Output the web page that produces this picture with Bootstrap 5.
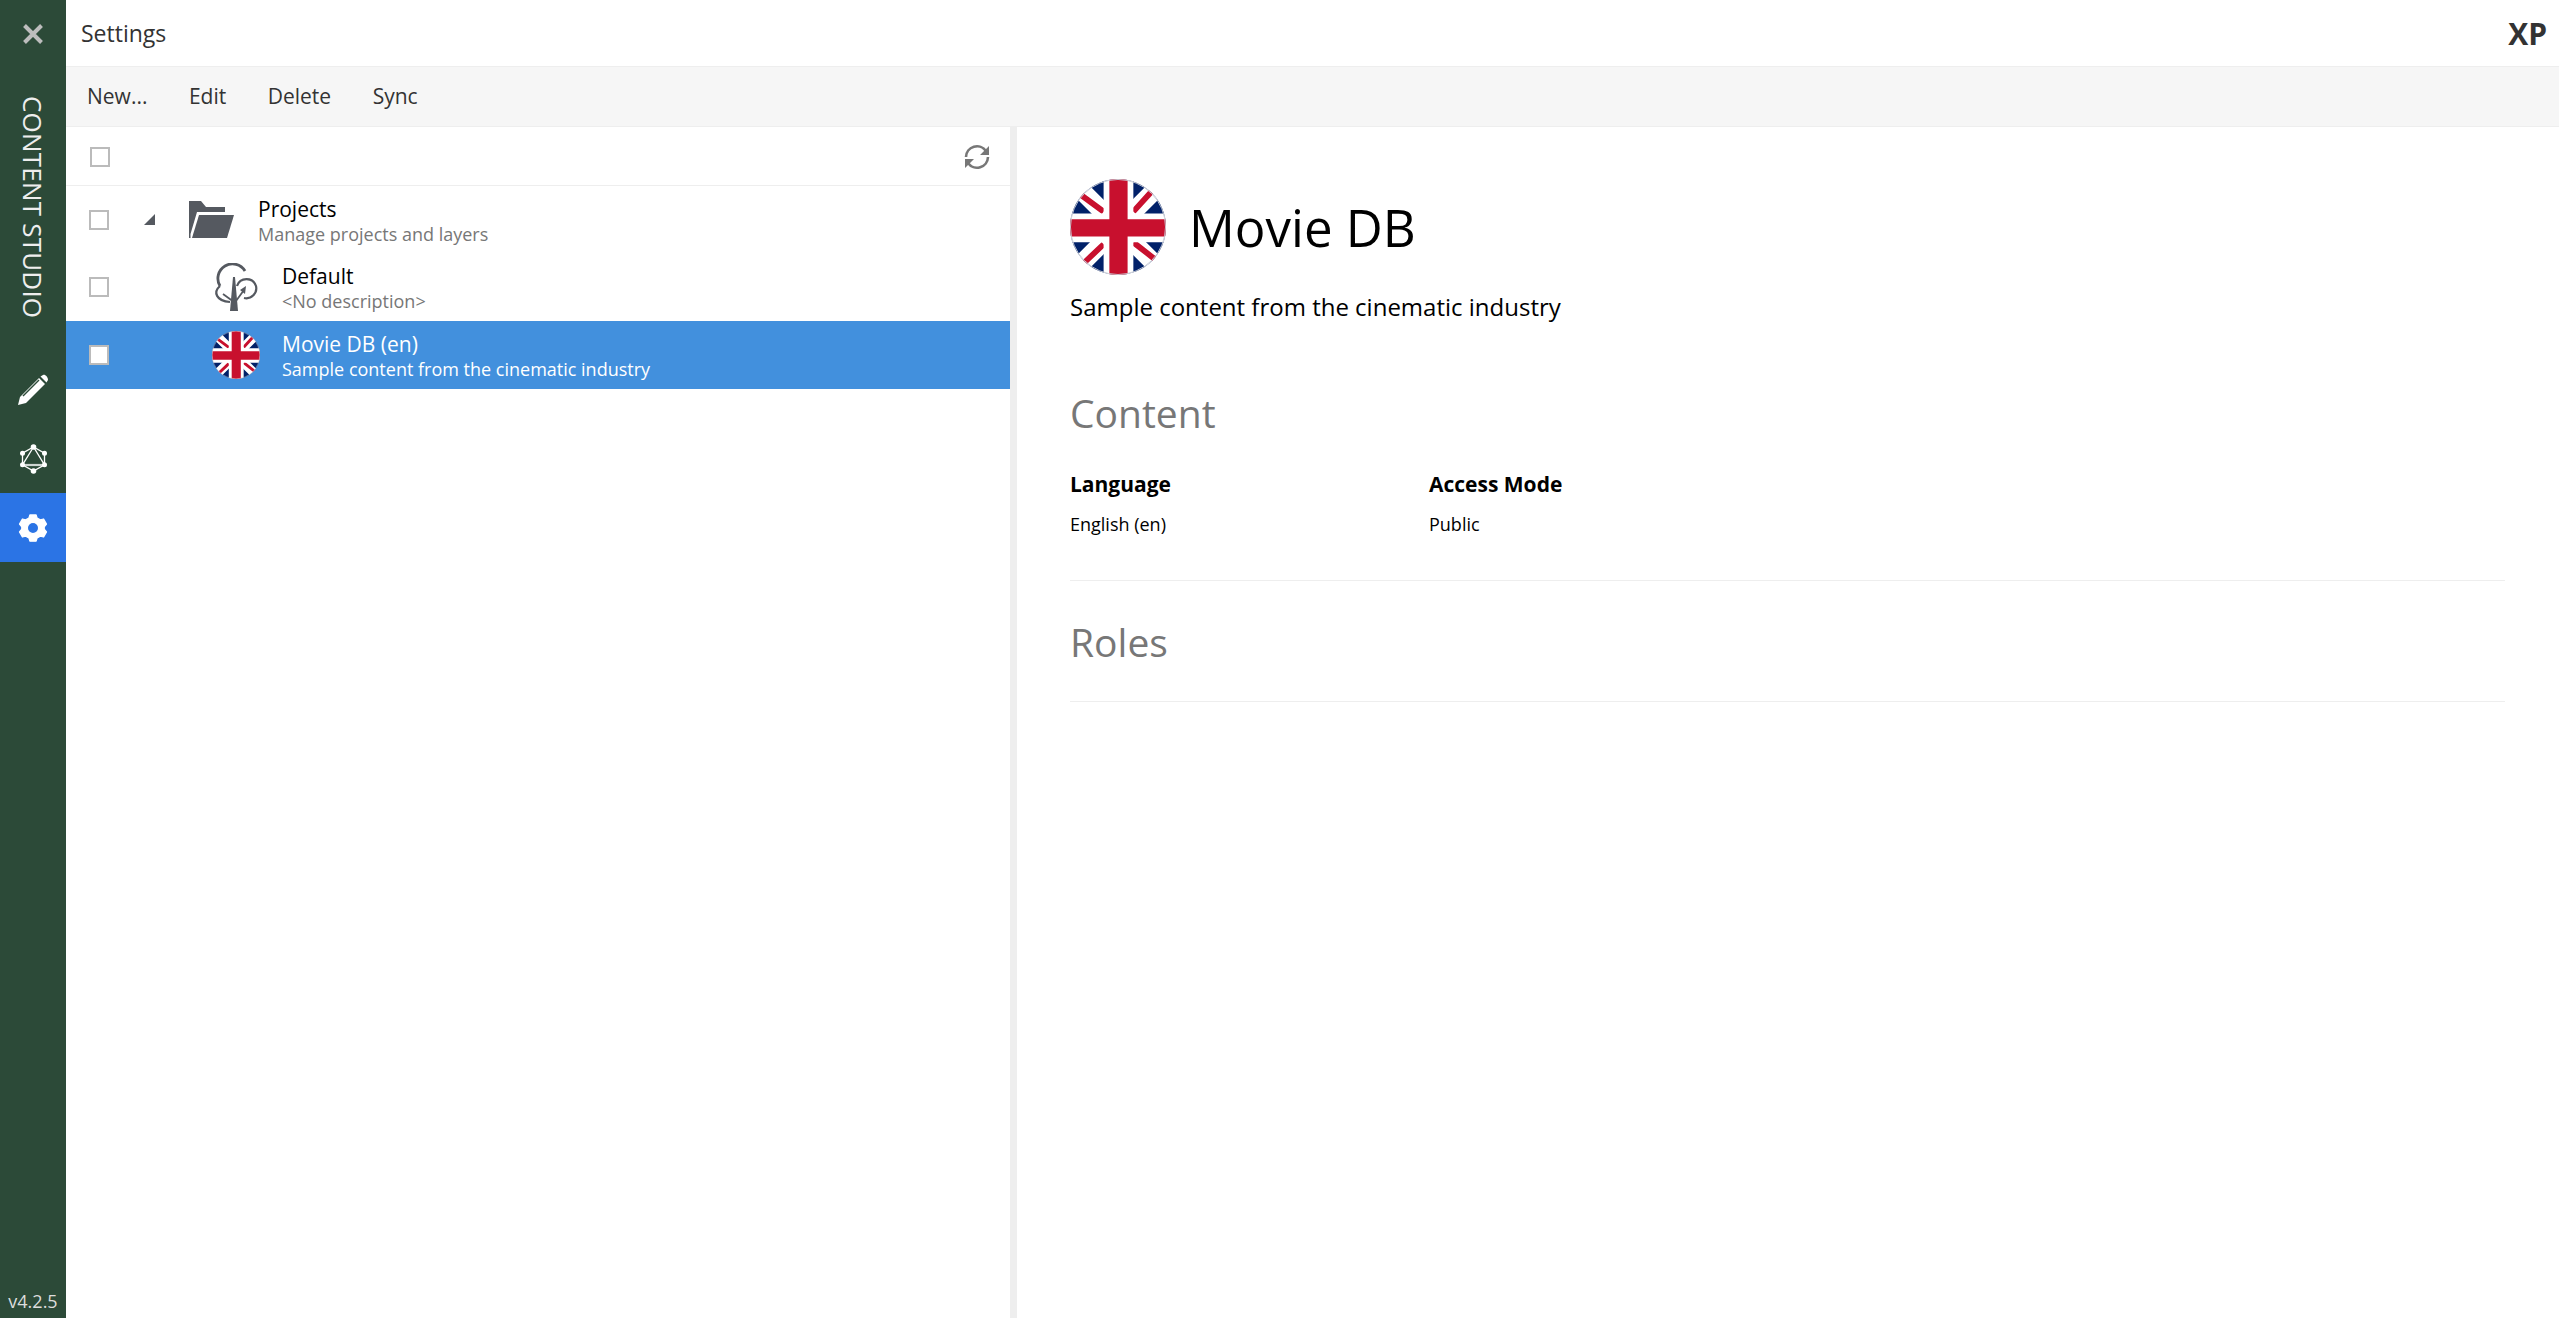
<!DOCTYPE html>
<html lang="en">
<head>
  <title>Settings - Content Studio</title>
  <meta charset="utf-8" />
  <link href="https://cdn.jsdelivr.net/npm/bootstrap@5.3.3/dist/css/bootstrap.min.css" rel="stylesheet" />
  <script src="https://cdn.jsdelivr.net/npm/bootstrap@5.3.3/dist/js/bootstrap.bundle.min.js"></script>
  <style>
    html, body { height: 100%; }
    body { font-family: "Open Sans", sans-serif; color: #000; overflow: hidden; }
    .launcher { width: 66px; background: #2c4a38; color: #fff; }
    .launcher-close { height: 68px; }
    .launcher-title { writing-mode: vertical-rl; font-size: 26px; line-height: 30px; height: 287px; padding-top: 28px; color: #eee; letter-spacing: .2px; }
    .launcher-item { height: 69px; }
    .launcher-item.active-app { background: #2b74e5; }
    .launcher-version { font-size: 18px; line-height: 20px; color: #ddd; padding-bottom: 7px; }
    .app-title { height: 67px; padding-left: 15px; padding-right: 12px; font-size: 23px; color: #333; border-bottom: 1px solid #eee; }
    .xp-logo { font-weight: 700; font-size: 30px; color: #333; }
    .tool-strip { height: 60px; background: #f6f6f6; border-bottom: 1px solid #eee; padding-left: 21px; gap: 41.500px; font-size: 21px; color: #333; }
    .tree-panel { width: 944px; }
    .panel-split { width: 7px; background: #eee; }
    .tree-head { height: 59px; padding: 2px 19px 0 24px; border-bottom: 1px solid #eee; }
    .tick { width: 20px; height: 20px; border: 2px solid #bbb; background: #fff; flex: none; }
    .tree-row { height: 67.500px; padding-left: 23px; }
    .row-arrow { width: 11px; margin-left: 35px; margin-right: 33px; flex: none; }
    .row-spacer { width: 103px; flex: none; }
    .row-icon { width: 48px; flex: none; }
    .row-text { margin-left: 22px; padding-top: 2px; }
    .row-name { font-size: 21px; line-height: 26px; }
    .row-sub { font-size: 18px; line-height: 24px; color: #777; }
    .row-picked { background: #4290dd; color: #fff; }
    .row-picked .row-sub { color: #fff; }
    .detail-pane { padding: 52px 54px 0 53px; }
    .detail-name { font-size: 51px; margin-left: 23px; padding-top: 2px; line-height: 1.2; font-weight: 400; margin-bottom: 0; }
    .detail-desc { font-size: 24px; line-height: 30px; margin-top: 17px; margin-bottom: 0; }
    .detail-section { font-size: 39px; line-height: 52px; color: #777; font-weight: 400; margin: 0; }
    .section-one { margin-top: 65px; padding-bottom: 44px; border-bottom: 1px solid #eee; }
    .section-two { margin-top: 35px; padding-bottom: 33px; border-bottom: 1px solid #eee; }
    .info-col { width: 359px; }
    .info-label { font-size: 21px; font-weight: 700; line-height: 28px; margin-top: 31px; }
    .info-value { font-size: 18px; line-height: 24px; margin-top: 14px; }
  </style>
</head>
<body>
  <svg width="0" height="0" class="position-absolute">
    <defs>
      <clipPath id="flagClip"><circle cx="50" cy="50" r="50" /></clipPath>
      <symbol id="ukFlag" viewBox="0 0 100 100">
        <g clip-path="url(#flagClip)">
          <rect width="100" height="100" fill="#012169" />
          <path d="M0 0L100 100M100 0L0 100" stroke="#fff" stroke-width="19" />
          <path d="M12 17L35 34M66 34L85 13M66 66L89 84M15 87L35 68" stroke="#c8102e" stroke-width="6" fill="none" />
          <path d="M35 0H66V100H35zM0 36H100V66H0z" fill="#fff" />
          <path d="M41 0H60V100H41zM0 42H100V60H0z" fill="#c8102e" />
        </g>
        <circle cx="50" cy="50" r="49.500" fill="none" stroke="#c9ccd4" stroke-width="1" />
      </symbol>
    </defs>
  </svg>

  <div class="d-flex h-100">
    <!-- launcher -->
    <aside class="launcher d-flex flex-column align-items-center flex-shrink-0">
      <div class="launcher-close d-flex align-items-center justify-content-center w-100">
        <svg width="20" height="20" viewBox="0 0 20 20"><path d="M1.500 1.500L18.500 18.500M18.500 1.500L1.500 18.500" stroke="#bdbdbd" stroke-width="4" /></svg>
      </div>
      <div class="launcher-title">CONTENT STUDIO</div>
      <div class="launcher-item d-flex align-items-center justify-content-center w-100">
        <svg width="32" height="32" viewBox="0 0 32 32"><path d="M1 31L3 23L22 4L28 10L9 29Z" fill="#fff" /><path d="M23.500 2.500L26 1C28 0 31 3 31 6L29.500 8.500Z" fill="#fff" /><path d="M6 22L22 6" stroke="#2c4a38" stroke-width="1.500" /></svg>
      </div>
      <div class="launcher-item d-flex align-items-center justify-content-center w-100">
        <svg width="27" height="30" viewBox="0 0 27 30" fill="#fff"><path d="M13.500 3L24.500 9.200V20.800L13.500 27L2.500 20.800V9.200ZM13.500 3L2.500 20.800H24.500Z" fill="none" stroke="#fff" stroke-width="1.300" /><path d="M5 21H22" stroke="#cfd6d2" stroke-width="2.200" /><circle cx="13.500" cy="3" r="2.800" /><circle cx="24.500" cy="9.200" r="2.500" /><circle cx="24.500" cy="20.800" r="2.500" /><circle cx="13.500" cy="27" r="2.800" /><circle cx="2.500" cy="20.800" r="2.500" /><circle cx="2.500" cy="9.200" r="2.500" /></svg>
      </div>
      <div class="launcher-item active-app d-flex align-items-center justify-content-center w-100">
        <svg width="30" height="30" viewBox="0 0 24 24"><path fill="#fff" fill-rule="evenodd" stroke="#fff" stroke-linejoin="round" d="M9.500 1.500H14.500L15.300 4.100L17.800 5.500L20.500 4.800L22.800 8.900L21 11V13L22.800 15.100L20.500 19.200L17.800 18.500L15.300 19.900L14.500 22.500H9.500L8.700 19.900L6.200 18.500L3.500 19.200L1.200 15.100L3 13V11L1.200 8.900L3.500 4.800L6.200 5.500L8.700 4.100ZM12 7.500A4.500 4.500 0 1 0 12 16.500A4.500 4.500 0 1 0 12 7.500Z" /></svg>
      </div>
      <div class="launcher-version mt-auto">v4.2.5</div>
    </aside>

    <div class="flex-grow-1 d-flex flex-column" style="min-width:0">
      <div class="app-title d-flex align-items-center justify-content-between">
        <span>Settings</span>
        <span class="xp-logo">XP</span>
      </div>
      <div class="tool-strip d-flex align-items-center">
        <span>New...</span><span>Edit</span><span>Delete</span><span>Sync</span>
      </div>

      <div class="d-flex flex-grow-1" style="min-height:0">
        <section class="tree-panel flex-shrink-0">
          <div class="tree-head d-flex align-items-center justify-content-between">
            <span class="tick"></span>
            <svg width="28" height="28" viewBox="0 0 28 28" fill="none"><path d="M3 14A11 11 0 0 1 23 8M25 14A11 11 0 0 1 5 20" stroke="#777" stroke-width="2.600" /><path d="M26 3V12H17ZM2 25V16H11Z" fill="#777" /></svg>
          </div>
          <div class="tree-row d-flex align-items-center">
            <span class="tick"></span>
            <svg class="row-arrow" height="11" viewBox="0 0 11 11"><path d="M0 11H11V0Z" fill="#555960" /></svg>
            <svg class="row-icon" height="37" viewBox="0 0 48 37"><path d="M1 37V0H13L18 6H37V11H9L2.500 33V37Z" fill="#555960" /><path d="M4 37L11 14H46L39 37Z" fill="#555960" /></svg>
            <div class="row-text">
              <div class="row-name">Projects</div>
              <div class="row-sub">Manage projects and layers</div>
            </div>
          </div>
          <div class="tree-row d-flex align-items-center">
            <span class="tick"></span>
            <span class="row-spacer"></span>
            <svg class="row-icon" height="48" viewBox="-3 0 48 48" fill="none" stroke="#555960"><path d="M5 23A14.500 14.500 0 1 1 30 8" stroke-width="2.800" /><path d="M22 23A10 10 0 0 1 41 23A10 10 0 0 1 29 35" stroke-width="2.200" /><path d="M5 23C-2 29 1 38 15 39" stroke-width="2.200" /><path d="M8 31L19 39M21 38L29 27" stroke-width="1.800" /><path d="M18 14H20L23 48H15Z" fill="#555960" stroke="none" /><path d="M31 23L30 31L25 27Z" fill="#555960" stroke="none" /></svg>
            <div class="row-text">
              <div class="row-name">Default</div>
              <div class="row-sub">&lt;No description&gt;</div>
            </div>
          </div>
          <div class="tree-row row-picked d-flex align-items-center">
            <span class="tick"></span>
            <span class="row-spacer"></span>
            <svg class="row-icon" height="48" viewBox="0 0 100 100"><use href="#ukFlag" /></svg>
            <div class="row-text">
              <div class="row-name">Movie DB (en)</div>
              <div class="row-sub">Sample content from the cinematic industry</div>
            </div>
          </div>
        </section>

        <div class="panel-split flex-shrink-0"></div>

        <main class="detail-pane flex-grow-1">
          <div class="d-flex align-items-center">
            <svg width="96" height="96" viewBox="0 0 100 100"><use href="#ukFlag" /></svg>
            <h1 class="detail-name">Movie DB</h1>
          </div>
          <p class="detail-desc">Sample content from the cinematic industry</p>

          <div class="section-one">
            <h2 class="detail-section">Content</h2>
            <div class="d-flex">
              <div class="info-col">
                <div class="info-label">Language</div>
                <div class="info-value">English (en)</div>
              </div>
              <div class="info-col">
                <div class="info-label">Access Mode</div>
                <div class="info-value">Public</div>
              </div>
            </div>
          </div>
          <div class="section-two">
            <h2 class="detail-section">Roles</h2>
          </div>
        </main>
      </div>
    </div>
  </div>
</body>
</html>
